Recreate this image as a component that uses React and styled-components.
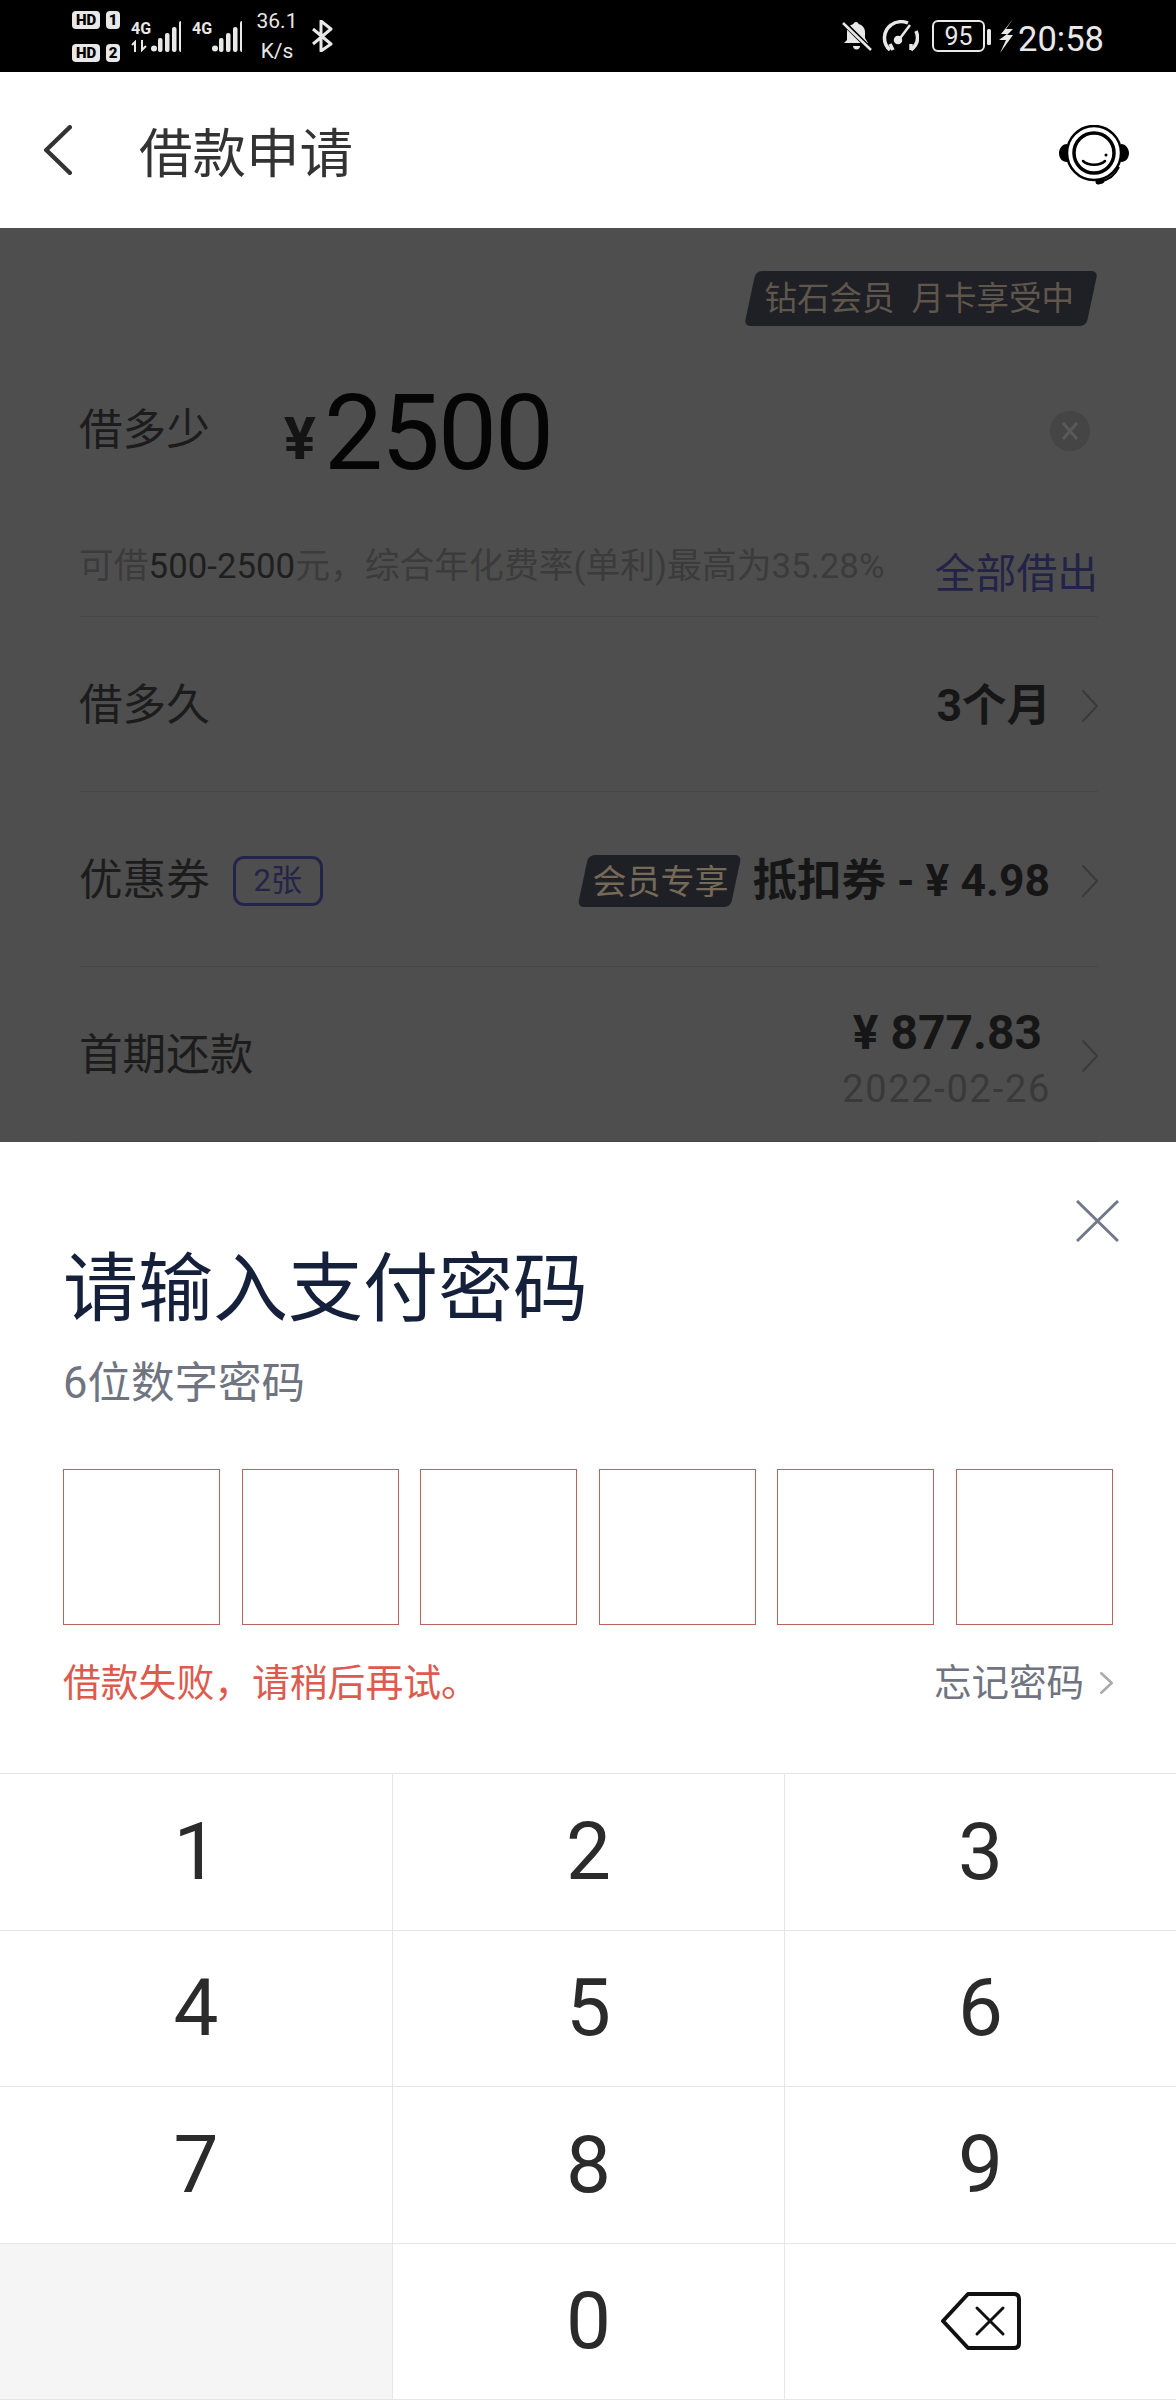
import React from "react";
import styled, { createGlobalStyle } from "styled-components";

const cjk = `Roboto, "Noto Sans CJK SC", sans-serif`;

const GlobalStyle = createGlobalStyle`
  html, body { margin: 0; padding: 0; background: #fff; }
  * { box-sizing: border-box; }
  body { font-family: ${cjk}; }
`;

const Page = styled.div`
  width: 1176px;
  height: 2400px;
  display: flex;
  flex-direction: column;
  overflow: hidden;
`;

/* status bar */
const StatusBar = styled.div`
  height: 72px;
  flex: none;
  background: #000;
  color: #e8e8e8;
  display: flex;
  align-items: center;
  justify-content: space-between;
  padding: 0 72px;
`;
const StatusGroup = styled.div`
  display: flex;
  align-items: center;
`;
const SimColumn = styled.div`
  display: flex;
  flex-direction: column;
  gap: 15px;
  margin-right: 11px;
`;
const SimRow = styled.div`
  display: flex;
  gap: 6px;
`;
const SimChip = styled.span`
  height: 18px;
  width: ${(p) => p.$w}px;
  background: #e8e8e8;
  color: #000;
  border-radius: 4px;
  font-size: 15px;
  font-weight: 900;
  line-height: 18px;
  text-align: center;
`;
const SignalBlock = styled.div`
  display: flex;
  align-items: flex-end;
  margin-right: 11px;
`;
const SignalLabel = styled.div`
  width: 19px;
  height: 31px;
  display: flex;
  flex-direction: column;
`;
const Gen = styled.span`
  font-family: "Liberation Sans Narrow", Roboto, sans-serif;
  font-size: 16px;
  font-weight: 700;
  line-height: 16px;
`;
const Speed = styled.div`
  width: 46px;
  margin: 0 12px 0 1px;
  text-align: center;
  font-size: 21px;
  line-height: 30px;
`;
const Clock = styled.span`
  font-size: 34.5px;
  line-height: 40px;
  margin: 5px 0 0 4px;
`;

/* nav */
const NavBar = styled.div`
  height: 156px;
  flex: none;
  background: #fff;
  display: flex;
  align-items: center;
  padding: 0 47px 0 44px;
`;
const NavTitle = styled.div`
  font-size: 53.5px;
  line-height: 60px;
  color: #333;
  margin: 9px 0 0 67px;
  flex: 1;
`;

/* dimmed form */
const DimArea = styled.div`
  height: 914px;
  flex: none;
  background: #4e4e4e;
  padding: 43px 78px 0 79px;
  overflow: hidden;
`;
const BadgeRow = styled.div`
  display: flex;
  justify-content: flex-end;
`;
const Slanted = styled.div`
  position: relative;
  z-index: 0;
  color: ${(p) => p.$color};
  white-space: nowrap;
  font-size: ${(p) => p.$size}px;
  height: ${(p) => p.$h}px;
  line-height: ${(p) => p.$h + 2}px;
  padding: ${(p) => p.$pad};
  word-spacing: ${(p) => p.$gap || 0}px;
  &::before {
    content: "";
    position: absolute;
    z-index: -1;
    inset: 0 6px;
    background: #1f1f26;
    border-radius: 6px;
    transform: skewX(-12deg);
  }
`;
const AmountRow = styled.div`
  height: 210px;
  display: flex;
  align-items: center;
`;
const Label = styled.div`
  font-size: 43.6px;
  line-height: 50px;
  color: #1c1c1c;
`;
const Yen = styled.span`
  font-size: 60px;
  font-weight: 700;
  color: #141414;
  margin: 0 8px 0 74px;
  line-height: 60px;
  position: relative;
  top: 8px;
`;
const Amount = styled.span`
  font-size: 105px;
  line-height: 120px;
  color: #050505;
  letter-spacing: -2px;
  flex: 1;
  padding-top: 5px;
`;
const ClearMark = styled.svg`
  flex: none;
  margin-right: 8px;
`;
const HintRow = styled.div`
  height: 81px;
  border-bottom: 1px solid #474747;
  display: flex;
  justify-content: space-between;
`;
const Hint = styled.div`
  font-size: 34.8px;
  line-height: 61px;
  color: #3b3b3b;
  white-space: nowrap;
`;
const HintDark = styled.span`
  color: #1f1f1f;
`;
const AllLink = styled.div`
  font-size: 40.8px;
  line-height: 76px;
  color: #232347;
`;
const Row = styled.div`
  height: 175px;
  flex: none;
  padding-top: 4px;
  border-bottom: 1px solid #474747;
  display: flex;
  align-items: center;
  justify-content: space-between;
`;
const RowLeft = styled.div`
  display: flex;
  align-items: center;
`;
const RowRight = styled.div`
  display: flex;
  align-items: center;
`;
const CountChip = styled.span`
  width: 90px;
  height: 50px;
  margin-left: 23px;
  border: 3px solid #24244a;
  border-radius: 11px;
  color: #24244a;
  font-size: 31px;
  line-height: 44px;
  text-align: center;
`;
const Strong = styled.span`
  font-size: 44.5px;
  font-weight: 700;
  line-height: 50px;
  color: #161616;
  white-space: nowrap;
  margin-left: ${(p) => p.$ml || 0}px;
`;
const Stack = styled.div`
  display: flex;
  flex-direction: column;
  align-items: flex-end;
  padding-top: 4px;
`;
const Money = styled.span`
  font-size: 48px;
  font-weight: 700;
  line-height: 54px;
  color: #161616;
  margin-right: 9px;
`;
const DateText = styled.span`
  font-size: 38px;
  line-height: 44px;
  color: #393939;
  letter-spacing: 1.7px;
  margin-top: 7px;
`;
const ChevronBox = styled.svg`
  flex: none;
  display: block;
  margin-left: ${(p) => p.$ml || 0}px;
  transform: ${(p) => (p.$left ? "scaleX(-1)" : "none")};
`;

/* bottom sheet */
const Sheet = styled.div`
  flex: 1;
  min-height: 0;
  background: #fff;
  display: flex;
  flex-direction: column;
`;
const SheetHead = styled.div`
  display: flex;
  justify-content: flex-end;
  padding: 58px 57px 0 0;
`;
const SheetBody = styled.div`
  padding: 2px 63px 0 63px;
`;
const SheetTitle = styled.div`
  font-size: 75px;
  line-height: 90px;
  color: #15203a;
  white-space: nowrap;
`;
const SheetSub = styled.div`
  margin-top: 20px;
  font-size: 43.5px;
  line-height: 60px;
  color: #6f7480;
`;
const PinRow = styled.div`
  margin-top: 55px;
  display: grid;
  grid-template-columns: repeat(6, 157px);
  justify-content: space-between;
`;
const PinBox = styled.div`
  height: 156px;
  border: 1px solid #b8645d;
`;
const MessageRow = styled.div`
  margin-top: 33px;
  display: flex;
  align-items: center;
  justify-content: space-between;
  line-height: 50px;
`;
const ErrorText = styled.div`
  font-size: 37.8px;
  color: #dd5a4e;
`;
const Forgot = styled.div`
  display: flex;
  align-items: center;
  font-size: 37.5px;
  color: #6f7480;
`;
const Keypad = styled.div`
  margin-top: auto;
  height: 627px;
  border-top: 1px solid #e6e6e6;
  display: grid;
  grid-template-columns: 393px 392px 391px;
  grid-template-rows: repeat(4, 1fr);
`;
const Key = styled.div`
  display: flex;
  align-items: center;
  justify-content: center;
  font-size: 80px;
  color: #2b2b2b;
  background: ${(p) => (p.$muted ? "#f5f5f5" : "#fff")};
  border-bottom: 1px solid #e6e6e6;
  border-right: ${(p) => (p.$last ? "none" : "1px solid #e6e6e6")};
`;

const Chevron = ({ w = 16, h = 32, color = "#3a3a3a", sw = 2, ml, left }) => (
  <ChevronBox $ml={ml} $left={left} width={w} height={h} viewBox={`0 0 ${w} ${h}`} fill="none">
    <path
      d={`M${sw / 2} ${sw / 2} L${w - sw / 2} ${h / 2} L${sw / 2} ${h - sw / 2}`}
      stroke={color}
      strokeWidth={sw}
      strokeLinecap="round"
      strokeLinejoin="round"
    />
  </ChevronBox>
);

const Bars = ({ width, dotX }) => (
  <svg width={width} height="31" viewBox={`0 0 ${width} 31`} fill="#e8e8e8">
    <circle cx={dotX} cy="27.5" r="3" />
    {[[6, 17], [13, 12], [20, 6], [27, 0]].map(([x, y]) => (
      <rect key={x} x={x + dotX - 3 + 1} y={y} width="4.5" height={31 - y} rx="2" />
    ))}
  </svg>
);

const Bell = () => (
  <svg width="30" height="32" viewBox="0 0 30 32" fill="#e8e8e8" style={{ marginRight: 10, marginLeft: 3 }}>
    <path d="M14 2c1.500 0 2.500 1 2.500 2 4 1 6.500 4 6.500 8v6l3 5H2l3-3v-8c0-4 3-7 6.500-8 0-1 1-2 2.500-2z" />
    <path d="M11 26h7c0 2-1.500 3.500-3.500 3.500S11 28 11 26z" />
    <path d="M1 2 L29 30" stroke="#000" strokeWidth="5" />
    <path d="M1 3 L29 30" stroke="#e8e8e8" strokeWidth="2.500" />
  </svg>
);

const Gauge = () => (
  <svg width="37" height="32" viewBox="0 0 37 32" fill="none" stroke="#e8e8e8" strokeWidth="3.500" style={{ marginRight: 13 }}>
    <path d="M8 30 C0 23 1 11 9 5 C14 1 21 1 26 3" />
    <path d="M34 11 C37 18 35 25 29 30" />
    <path d="M8 24 l3 6 M29 24 l0 6" />
    <path d="M16 21 L28 5" strokeWidth="2.500" />
    <circle cx="16" cy="20" r="2.500" fill="#e8e8e8" />
  </svg>
);

const Battery = () => (
  <svg width="60" height="32" viewBox="0 0 60 32" fill="none" style={{ marginRight: 7 }}>
    <rect x="1" y="1" width="51" height="30" rx="5" stroke="#e8e8e8" strokeWidth="2" />
    <rect x="55" y="9" width="4" height="16" rx="1.500" fill="#e8e8e8" />
    <text x="26.500" y="25" fontFamily="Roboto, sans-serif" fontSize="25" fill="#e8e8e8" textAnchor="middle">95</text>
  </svg>
);

const Bolt = () => (
  <svg width="15" height="34" viewBox="0 0 15 34" fill="#e8e8e8">
    <path d="M14 0 L2 15 L8 15 L0 21 L7 21 L1 34 L14 16 L8 16 L14 10 L7 10 Z" />
  </svg>
);

const Bluetooth = () => (
  <svg width="21" height="32" viewBox="0 0 21 32" fill="none" stroke="#e8e8e8" strokeWidth="3">
    <path d="M1 9 L19 24 L9 31 V1 L19 9 L1 24" strokeLinejoin="round" />
  </svg>
);

const Arrows = () => (
  <svg width="18" height="12" viewBox="0 0 18 12" fill="none" stroke="#e8e8e8" strokeWidth="2" style={{ marginTop: 3 }}>
    <path d="M4 12 V2 L1 5" />
    <path d="M11 0 V10 L15 6" />
  </svg>
);

const Headset = () => (
  <svg width="70" height="60" viewBox="0 0 70 60" fill="none" stroke="#000" style={{ marginTop: 10 }}>
    <circle cx="35" cy="28" r="27" strokeWidth="2.500" />
    <circle cx="35" cy="28" r="20" strokeWidth="3.500" />
    <path d="M8 19 C3 19 0 24 0 28 C0 33 3 37 8 37 Z M62 19 C67 19 70 24 70 28 C70 33 67 37 62 37 Z" fill="#000" stroke="none" />
    <path d="M24 36 C29 41 41 41 46 36" strokeWidth="2.500" strokeLinecap="round" />
    <circle cx="47" cy="30" r="1.500" fill="#000" stroke="none" />
    <path d="M60 42 C56 50 50 55 42 56" strokeWidth="2" />
    <path d="M39 57 L43 56" strokeWidth="5" strokeLinecap="round" />
  </svg>
);

const Backspace = () => (
  <svg width="80" height="58" viewBox="0 0 80 58" fill="none" stroke="#111">
    <path d="M27 2 H73 Q78 2 78 7 V51 Q78 56 73 56 H27 L2 29 Z" strokeWidth="4" strokeLinejoin="round" />
    <path d="M36 16 L62 42 M62 16 L36 42" strokeWidth="3" strokeLinecap="round" />
  </svg>
);

const Clear = () => (
  <ClearMark width="40" height="40" viewBox="0 0 40 40" fill="none">
    <circle cx="20" cy="20" r="20" fill="#454545" />
    <path d="M13 12 L27 28 M27 12 L13 28" stroke="#595959" strokeWidth="3" />
  </ClearMark>
);

const keys = ["1", "2", "3", "4", "5", "6", "7", "8", "9", "", "0", "back"];

export default function App() {
  return (
    <Page>
      <GlobalStyle />
      <StatusBar>
        <StatusGroup>
          <SimColumn>
            <SimRow><SimChip $w={28}>HD</SimChip><SimChip $w={14}>1</SimChip></SimRow>
            <SimRow><SimChip $w={28}>HD</SimChip><SimChip $w={14}>2</SimChip></SimRow>
          </SimColumn>
          <SignalBlock>
            <SignalLabel><Gen>4G</Gen><Arrows /></SignalLabel>
            <Bars width={31} dotX={4} />
          </SignalBlock>
          <SignalBlock>
            <SignalLabel><Gen>4G</Gen></SignalLabel>
            <Bars width={31} dotX={4} />
          </SignalBlock>
          <Speed>36.1<br />K/s</Speed>
          <Bluetooth />
        </StatusGroup>
        <StatusGroup>
          <Bell />
          <Gauge />
          <Battery />
          <Bolt />
          <Clock>20:58</Clock>
        </StatusGroup>
      </StatusBar>

      <NavBar>
        <Chevron w={28} h={50} color="#333" sw={4.5} left />
        <NavTitle>借款申请</NavTitle>
        <Headset />
      </NavBar>

      <DimArea>
        <BadgeRow>
          <Slanted $size={32.5} $h={55} $gap={9} $color="#5f574c" $pad="0 24px 0 20px">钻石会员 月卡享受中</Slanted>
        </BadgeRow>
        <AmountRow>
          <Label>借多少</Label>
          <Yen>¥</Yen>
          <Amount>2500</Amount>
          <Clear />
        </AmountRow>
        <HintRow>
          <Hint>可借<HintDark>500-2500</HintDark>元，综合年化费率(单利)最高为35.28%</Hint>
          <AllLink>全部借出</AllLink>
        </HintRow>
        <Row>
          <Label>借多久</Label>
          <RowRight>
            <Strong>3个月</Strong>
            <Chevron ml={31} />
          </RowRight>
        </Row>
        <Row>
          <RowLeft>
            <Label>优惠券</Label>
            <CountChip>2张</CountChip>
          </RowLeft>
          <RowRight>
            <Slanted $size={34} $h={52} $color="#756a58" $pad="0 14px 0 15px">会员专享</Slanted>
            <Strong $ml={10}>抵扣券 - ¥ 4.98</Strong>
            <Chevron ml={32} />
          </RowRight>
        </Row>
        <Row>
          <Label>首期还款</Label>
          <RowRight>
            <Stack>
              <Money>¥ 877.83</Money>
              <DateText>2022-02-26</DateText>
            </Stack>
            <Chevron ml={31} />
          </RowRight>
        </Row>
      </DimArea>

      <Sheet>
        <SheetHead>
          <svg width="43" height="42" viewBox="0 0 43 42" fill="none" stroke="#727a8a" strokeWidth="3">
            <path d="M1 1 L42 41 M42 1 L1 41" />
          </svg>
        </SheetHead>
        <SheetBody>
          <SheetTitle>请输入支付密码</SheetTitle>
          <SheetSub>6位数字密码</SheetSub>
          <PinRow>
            {[0, 1, 2, 3, 4, 5].map((i) => <PinBox key={i} />)}
          </PinRow>
          <MessageRow>
            <ErrorText>借款失败，请稍后再试。</ErrorText>
            <Forgot>
              忘记密码
              <Chevron ml={16} w={13} h={22} color="#aaa" sw={2.5} />
            </Forgot>
          </MessageRow>
        </SheetBody>
        <Keypad>
          {keys.map((k, i) => (
            <Key key={i} $muted={k === ""} $last={i % 3 === 2}>
              {k === "back" ? <Backspace /> : k}
            </Key>
          ))}
        </Keypad>
      </Sheet>
    </Page>
  );
}
